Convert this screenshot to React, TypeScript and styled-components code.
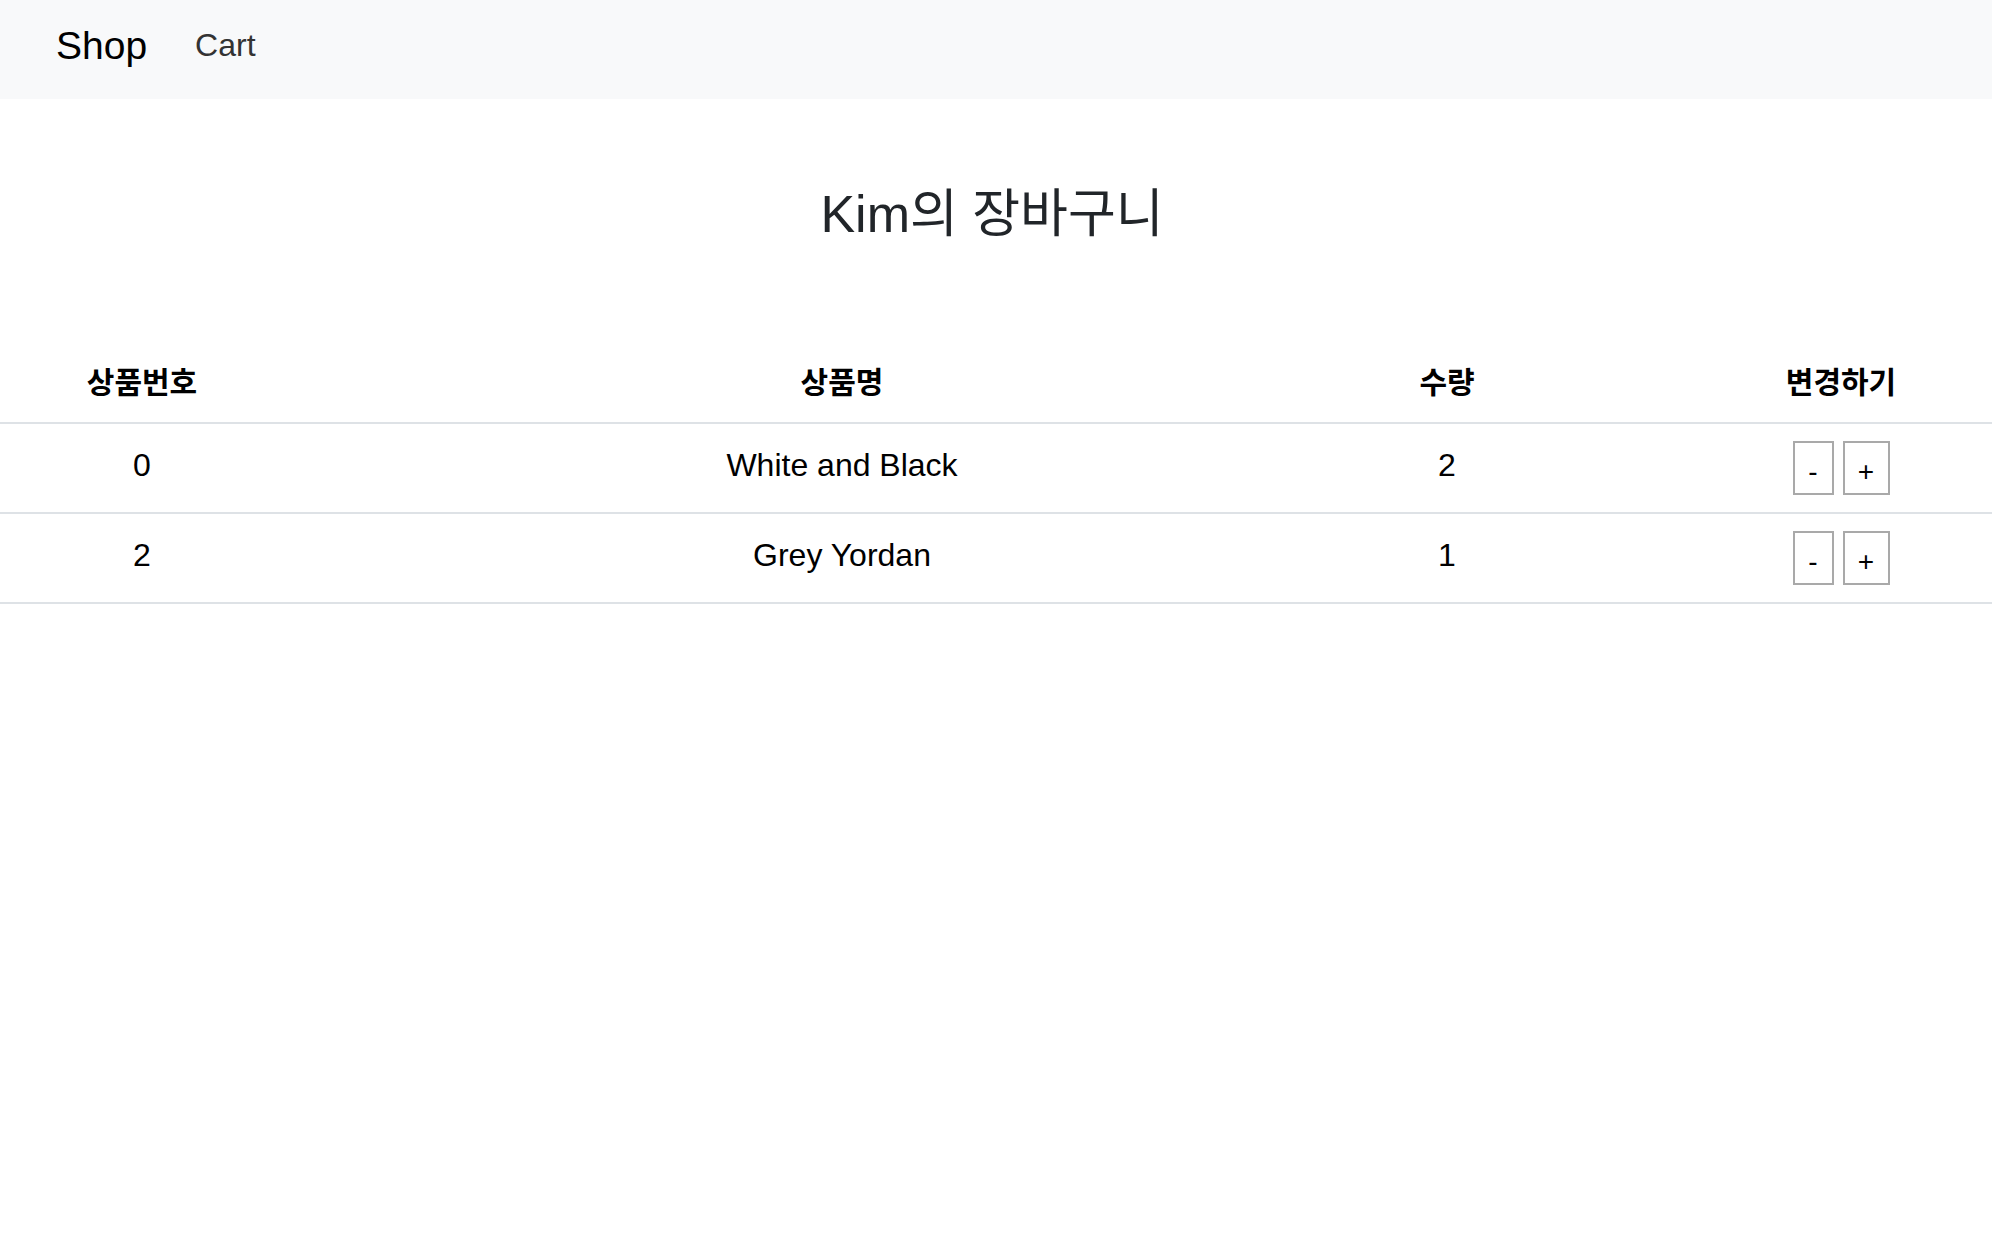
import React from "react";
import styled, { createGlobalStyle } from "styled-components";

const GlobalStyle = createGlobalStyle`
  html, body {
    margin: 0;
    padding: 0;
    background: #ffffff;
    font-family: "Liberation Sans", "Noto Sans CJK KR", sans-serif;
    color: #000000;
  }
`;

const NavBar = styled.nav`
  height: 99px;
  box-sizing: border-box;
  background: #f8f9fa;
  display: flex;
  align-items: center;
  padding: 0 56px 8px 56px;
  gap: 48px;
`;

const Brand = styled.a`
  font-family: "Liberation Sans", "Noto Sans CJK KR", sans-serif;
  font-size: 39px;
  color: #000000;
  text-decoration: none;
`;

const NavLink = styled.a`
  font-family: "Liberation Sans", "Noto Sans CJK KR", sans-serif;
  font-size: 32px;
  color: #333333;
  text-decoration: none;
`;

const Title = styled.h2`
  margin: 0;
  padding: 80px 8px 0 0;
  height: 258px;
  box-sizing: border-box;
  text-align: center;
  font-family: "Liberation Sans", "Noto Sans CJK KR", sans-serif;
  font-weight: 400;
  font-size: 52px;
  line-height: 70px;
  color: #212529;
`;

const Table = styled.div`
  display: flex;
  flex-direction: column;
`;

const Row = styled.div<{ $head?: boolean }>`
  display: grid;
  grid-template-columns: 284px 1116px 94px 1fr;
  align-items: center;
  height: ${(p) => (p.$head ? "45px" : "88px")};
  padding-bottom: ${(p) => (p.$head ? "20px" : "0")};
  border-bottom: 2px solid #dee2e6;
`;

const Cell = styled.div<{ $head?: boolean; $shift?: boolean }>`
  display: flex;
  justify-content: center;
  align-items: center;
  white-space: nowrap;
  padding-left: ${(p) => (p.$shift ? "196px" : "0")};
  padding-bottom: ${(p) => (p.$head || p.$shift ? "0" : "5px")};
  font-family: "Liberation Sans", "Noto Sans CJK KR", sans-serif;
  font-size: ${(p) => (p.$head ? "30px" : "32px")};
  font-weight: ${(p) => (p.$head ? 700 : 400)};
  color: #000000;
`;

const ButtonGroup = styled.div`
  display: flex;
  gap: 9px;
`;

const QtyButton = styled.button<{ $wide?: boolean }>`
  width: ${(p) => (p.$wide ? "47px" : "41px")};
  height: 54px;
  box-sizing: border-box;
  border: 2px solid #a9a9a9;
  background: #ffffff;
  font-family: "Liberation Sans", sans-serif;
  font-size: 28px;
  color: #000000;
  padding: 7px 0 0;
  display: flex;
  justify-content: center;
  align-items: center;
  cursor: pointer;
`;

const items = [
  { id: 0, name: "White and Black", count: 2 },
  { id: 2, name: "Grey Yordan", count: 1 },
];

export default function App() {
  return (
    <>
      <GlobalStyle />
      <NavBar>
        <Brand href="#">Shop</Brand>
        <NavLink href="#">Cart</NavLink>
      </NavBar>
      <Title>Kim의 장바구니</Title>
      <Table>
        <Row $head>
          <Cell $head>상품번호</Cell>
          <Cell $head>상품명</Cell>
          <Cell $head>수량</Cell>
          <Cell $head $shift>변경하기</Cell>
        </Row>
        {items.map((it) => (
          <Row key={it.id}>
            <Cell>{it.id}</Cell>
            <Cell>{it.name}</Cell>
            <Cell>{it.count}</Cell>
            <Cell $shift>
              <ButtonGroup>
                <QtyButton>-</QtyButton>
                <QtyButton $wide>+</QtyButton>
              </ButtonGroup>
            </Cell>
          </Row>
        ))}
      </Table>
    </>
  );
}
